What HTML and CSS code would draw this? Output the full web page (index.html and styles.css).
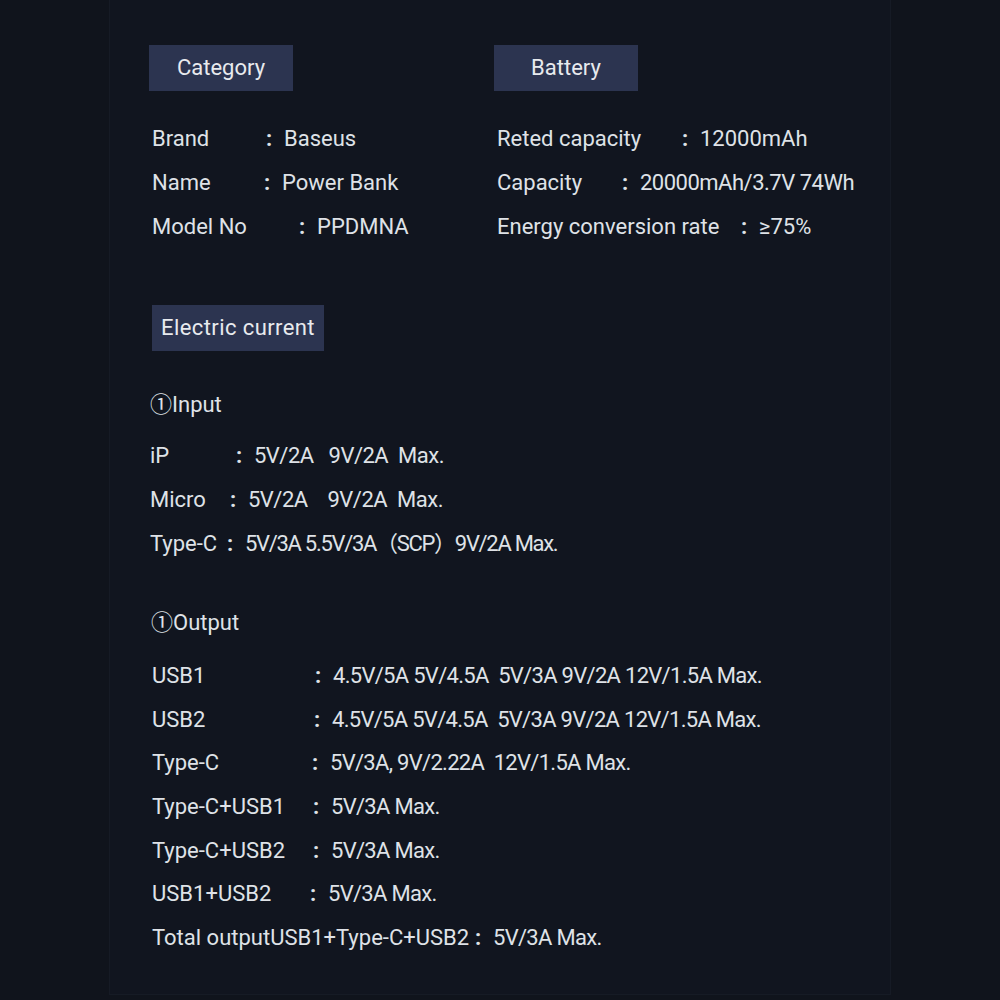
FILE: index.html
```html
<!DOCTYPE html>
<html lang="en">
<head>
    <meta charset="UTF-8">
    <meta name="viewport" content="width=device-width, initial-scale=1.0">
    <title>Power Bank Spec</title>
    <link rel="stylesheet" href="styles.css">
</head>
<body>
    <div class="panel">

        <div class="top">
            <div class="col">
                <div class="tag">Category</div>
                <div class="rows">
                    <div class="row"><span class="k k114">Brand</span><span class="sep">:</span><span>Baseus</span></div>
                    <div class="row"><span class="k k112">Name</span><span class="sep">:</span><span>Power Bank</span></div>
                    <div class="row"><span class="k k147">Model No</span><span class="sep">:</span><span>PPDMNA</span></div>
                </div>
            </div>
            <div class="col">
                <div class="tag">Battery</div>
                <div class="rows">
                    <div class="row"><span class="k k185">Reted capacity</span><span class="sep">:</span><span>12000mAh</span></div>
                    <div class="row"><span class="k k125">Capacity</span><span class="sep">:</span><span class="v-num">20000mAh/3.7V 74Wh</span></div>
                    <div class="row"><span class="k k244">Energy conversion rate</span><span class="sep">:</span><span>≥75%</span></div>
                </div>
            </div>
        </div>

        <div class="tag tag-wide">Electric current</div>

        <h2 class="sub">①Input</h2>
        <div class="rows rows-in">
            <div class="row"><span class="k k86">iP</span><span class="sep">:</span><span class="v">5V/2A&nbsp;&nbsp;&nbsp;9V/2A&nbsp;&nbsp;Max.</span></div>
            <div class="row"><span class="k k80">Micro</span><span class="sep">:</span><span class="v">5V/2A&nbsp;&nbsp;&nbsp;&nbsp;9V/2A&nbsp;&nbsp;Max.</span></div>
            <div class="row"><span class="k k77">Type-C</span><span class="sep">:</span><span class="v v-cond">5V/3A 5.5V/3A（SCP）9V/2A Max.</span></div>
        </div>

        <h2 class="sub sub-out">①Output</h2>
        <div class="rows rows-out">
            <div class="row"><span class="k k163">USB1</span><span class="sep">:</span><span class="v v-tight">4.5V/5A 5V/4.5A&nbsp;&nbsp;5V/3A 9V/2A 12V/1.5A Max.</span></div>
            <div class="row"><span class="k k162">USB2</span><span class="sep">:</span><span class="v v-tight">4.5V/5A 5V/4.5A&nbsp;&nbsp;5V/3A 9V/2A 12V/1.5A Max.</span></div>
            <div class="row"><span class="k k160">Type-C</span><span class="sep">:</span><span class="v v-tight">5V/3A, 9V/2.22A&nbsp;&nbsp;12V/1.5A Max.</span></div>
            <div class="row"><span class="k k161">Type-C+USB1</span><span class="sep">:</span><span class="v v-tight">5V/3A Max.</span></div>
            <div class="row"><span class="k k161">Type-C+USB2</span><span class="sep">:</span><span class="v v-tight">5V/3A Max.</span></div>
            <div class="row"><span class="k k158">USB1+USB2</span><span class="sep">:</span><span class="v v-tight">5V/3A Max.</span></div>
            <div class="row"><span class="k k-total">Total outputUSB1+Type-C+USB2</span><span class="sep">:</span><span class="v v-tight">5V/3A Max.</span></div>
        </div>

    </div>
</body>
</html>
```

FILE: styles.css
```css
body {
    margin: 0;
    background-color: #10141c;
    color: #dfe2e7;
    font-family: Roboto, "Noto Sans CJK JP", "DejaVu Sans", sans-serif;
    font-size: 22px;
}
.panel {
    width: 782px;
    min-height: 995px;
    margin: 0 auto;
    padding: 45px 0 0 39px;
    box-sizing: border-box;
    background-color: #11151f;
    border-left: 1px solid #161b25;
    border-right: 1px solid #161b25;
    border-bottom: 1px solid #161b25;
}
.top {
    display: grid;
    grid-template-columns: 345px auto;
}
.tag {
    width: 144px;
    height: 46px;
    line-height: 45px;
    text-align: center;
    font-size: 22px;
    background-color: #2c3450;
    color: #e8eaee;
}
.tag-wide {
    width: 172px;
    margin: 56px 0 0 3px;
    letter-spacing: 0.4px;
}
.rows {
    margin-top: 26px;
    padding-left: 3px;
}
.row {
    height: 44px;
    line-height: 44px;
    white-space: nowrap;
}
.k {
    display: inline-block;
}
.sep {
    display: inline-block;
    width: 18px;
    font-weight: bold;
}
.v {
    letter-spacing: -0.5px;
}
.v-num {
    letter-spacing: -0.5px;
}
.v-tight {
    letter-spacing: -0.7px;
}
.v-cond {
    letter-spacing: -1.3px;
}
.sub {
    margin: 32px 0 0 1px;
    font-size: 22px;
    font-weight: normal;
    line-height: 44px;
    height: 44px;
}
.sub-out {
    margin-top: 35px;
    margin-left: 2px;
}
.rows-in {
    margin-top: 7px;
    padding-left: 1px;
}
.rows-out {
    margin-top: 9px;
}
.rows-out .row {
    height: 43.7px;
    line-height: 43.7px;
}

.k77 { width: 77px; }
.k80 { width: 80px; }
.k86 { width: 86px; }
.k112 { width: 112px; }
.k114 { width: 114px; }
.k125 { width: 125px; }
.k147 { width: 147px; }
.k158 { width: 158px; }
.k160 { width: 160px; }
.k161 { width: 161px; }
.k162 { width: 162px; }
.k163 { width: 163px; }
.k185 { width: 185px; }
.k244 { width: 244px; }
.k-total { width: 323px; }
```
